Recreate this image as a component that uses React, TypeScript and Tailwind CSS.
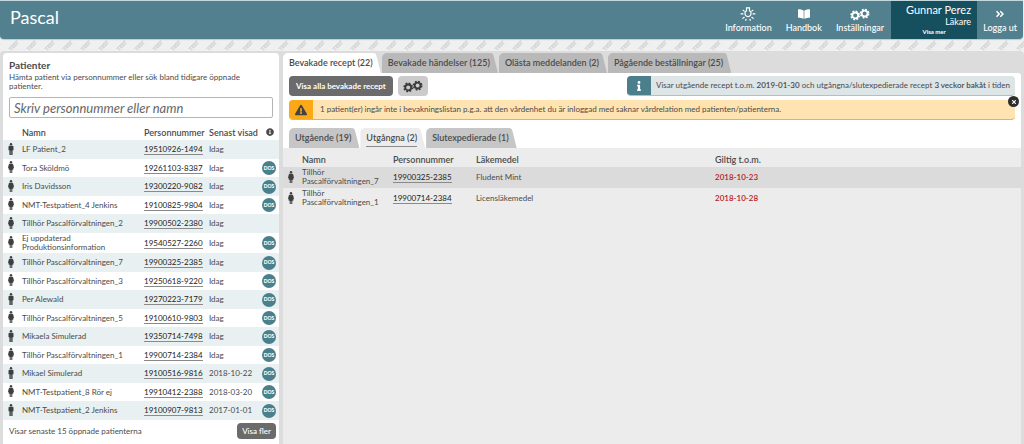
import type { ReactNode } from "react";
import { clsx } from "clsx";
import {
  FaAngleDoubleRight,
  FaBookOpen,
  FaExclamationTriangle,
  FaInfo,
  FaInfoCircle,
  FaTimes,
} from "react-icons/fa";

type Gender = "m" | "f";

type Patient = {
  name: string;
  pnr: string;
  seen: string;
  gender: Gender;
  dos?: boolean;
};

const patients: Patient[] = [
  { name: "LF Patient_2", pnr: "19510926-1494", seen: "Idag", gender: "m" },
  { name: "Tora Sköldmö", pnr: "19261103-8387", seen: "Idag", gender: "f", dos: true },
  { name: "Iris Davidsson", pnr: "19300220-9082", seen: "Idag", gender: "f", dos: true },
  { name: "NMT-Testpatient_4 Jenkins", pnr: "19100825-9804", seen: "Idag", gender: "f", dos: true },
  { name: "Tillhör Pascalförvaltningen_2", pnr: "19900502-2380", seen: "Idag", gender: "f" },
  { name: "Ej uppdaterad Produktionsinformation", pnr: "19540527-2260", seen: "Idag", gender: "f", dos: true },
  { name: "Tillhör Pascalförvaltningen_7", pnr: "19900325-2385", seen: "Idag", gender: "f", dos: true },
  { name: "Tillhör Pascalförvaltningen_3", pnr: "19250618-9220", seen: "Idag", gender: "f", dos: true },
  { name: "Per Alewald", pnr: "19270223-7179", seen: "Idag", gender: "m", dos: true },
  { name: "Tillhör Pascalförvaltningen_5", pnr: "19100610-9803", seen: "Idag", gender: "f", dos: true },
  { name: "Mikaela Simulerad", pnr: "19350714-7498", seen: "Idag", gender: "m", dos: true },
  { name: "Tillhör Pascalförvaltningen_1", pnr: "19900714-2384", seen: "Idag", gender: "f", dos: true },
  { name: "Mikael Simulerad", pnr: "19100516-9816", seen: "2018-10-22", gender: "m", dos: true },
  { name: "NMT-Testpatient_8 Rör ej", pnr: "19910412-2388", seen: "2018-03-20", gender: "f", dos: true },
  { name: "NMT-Testpatient_2 Jenkins", pnr: "19100907-9813", seen: "2017-01-01", gender: "m", dos: true },
];

const prescriptions = [
  { name: "Tillhör Pascalförvaltningen_7", pnr: "19900325-2385", drug: "Fludent Mint", valid: "2018-10-23" },
  { name: "Tillhör Pascalförvaltningen_1", pnr: "19900714-2384", drug: "Licensläkemedel", valid: "2018-10-28" },
];

const mainTabs = [
  "Bevakade recept (22)",
  "Bevakade händelser (125)",
  "Olästa meddelanden (2)",
  "Pågående beställningar (25)",
];

const subTabs = ["Utgående (19)", "Utgångna (2)", "Slutexpedierade (1)"];

const tabShape =
  "h-5 rounded-tl-[5px] text-[9px] font-semibold pl-1.5 pr-2 [clip-path:polygon(0_0,calc(100%-7px)_0,calc(100%-5px)_1px,calc(100%-4px)_4px,100%_100%,0_100%)]";

function LampIcon() {
  return (
    <svg
      viewBox="0 0 16 14"
      className="h-3.5 w-4"
      fill="none"
      stroke="currentColor"
      strokeWidth="1.2"
      strokeLinecap="round"
      aria-hidden="true"
    >
      <path d="M6.5 3.8a3.1 3.1 0 1 0 3 0V.8h-3z" />
      <path d="M1 6.8h2M13 6.8h2M2.8 11.4l1.4-1.1M13.2 11.4l-1.4-1.1M5.7 13.3l.4-1M10.3 13.3l-.4-1M3.2 3.3l1 .8M12.8 3.3l-1 .8" />
    </svg>
  );
}

function Cog({ cx, cy }: { cx: number; cy: number }) {
  return (
    <g fill="none" stroke="currentColor">
      <circle cx={cx} cy={cy} r="2.9" strokeWidth="1.8" />
      <circle cx={cx} cy={cy} r="4.1" strokeWidth="1.6" strokeDasharray="1.8 1.42" />
    </g>
  );
}

function Cogs() {
  return (
    <svg viewBox="0 0 20 13" className="h-[13px] w-5" aria-hidden="true">
      <Cog cx={5.2} cy={7.4} />
      <Cog cx={14.6} cy={5.6} />
    </svg>
  );
}

function Watermark() {
  return (
    <svg className="h-3 w-full" aria-hidden="true">
      <defs>
        <pattern id="watermark" x="4" width="18" height="12" patternUnits="userSpaceOnUse">
          <text
            x="7"
            y="12"
            transform="rotate(-45 7 12)"
            fontSize="5"
            fontWeight="900"
            fill="#d4d4d4"
            stroke="#d4d4d4"
            strokeWidth=".4"
          >
            TEST
          </text>
        </pattern>
      </defs>
      <rect width="100%" height="12" fill="url(#watermark)" />
    </svg>
  );
}

function HeaderLink({ icon, label }: { icon: ReactNode; label: string }) {
  return (
    <a href="#" className="flex flex-col items-center pt-[5px]">
      <span className="flex h-4 items-center">{icon}</span>
      <span className="text-[9px] leading-3 font-medium">{label}</span>
    </a>
  );
}

function PersonIcon({ gender }: { gender: Gender }) {
  return (
    <svg
      viewBox="0 0 12 24"
      className="h-3 w-1.5 fill-[#3f3f3f]"
      role="img"
      aria-label={gender === "m" ? "Man" : "Kvinna"}
    >
      <circle cx="6" cy="2.4" r="2.4" />
      {gender === "m" ? (
        <path d="M3 5.5h6a2 2 0 0 1 2 2v7H9.2V24H6.4v-8.5h-.8V24H2.8v-9.5H1v-7a2 2 0 0 1 2-2z" />
      ) : (
        <path d="M3.8 5.5h4.4c1.6 0 2.2 1.2 2.5 2.5l1.2 5.5c.2 1.4-1.2 1.8-1.7.7L9.8 12.5l.9 5H8.6V24H6.5v-6h-1v6H3.4v-6.5H1.3l.9-5-.4 1.7c-.5 1.1-1.9.7-1.7-.7L1.3 8c.3-1.3.9-2.5 2.5-2.5z" />
      )}
    </svg>
  );
}

function PnrLink({ pnr }: { pnr: string }) {
  return (
    <a href="#" className="inline-block border-b border-[#8a8a8a] leading-[10px] text-[#222]">
      {pnr}
    </a>
  );
}

function PatientPanel() {
  return (
    <section className="w-[276px] shrink-0 rounded-t-[4px] bg-white">
      <div className="px-1.5 pt-1.5">
        <h2 className="text-[10px] leading-3 font-bold">Patienter</h2>
        <p className="mt-0.5 leading-[9px]">
          Hämta patient via personnummer eller sök bland tidigare öppnade patienter.
        </p>
        <input
          type="text"
          aria-label="Skriv personnummer eller namn"
          placeholder="Skriv personnummer eller namn"
          className="mt-1.5 block h-[21px] w-full rounded-[2px] border border-[#b5b5b5] px-1 text-[13px] italic placeholder:text-[#666]"
        />
      </div>
      <table className="mt-1.5 w-full table-fixed leading-[9px]">
        <colgroup>
          <col className="w-[19px]" />
          <col />
          <col className="w-[65px]" />
          <col className="w-[53px]" />
          <col className="w-[17px]" />
        </colgroup>
        <thead>
          <tr className="h-4 text-left text-[9px] whitespace-nowrap">
            <th aria-label="Kön" />
            <th className="font-semibold">Namn</th>
            <th className="font-semibold">Personnummer</th>
            <th className="font-semibold">Senast visad</th>
            <th>
              <FaInfoCircle className="ml-1 size-2" aria-label="Information" />
            </th>
          </tr>
        </thead>
        <tbody>
          {patients.map((p) => (
            <tr key={p.pnr} className="odd:h-[19px] odd:bg-[#e8f0f1] even:h-[18px]">
              <td className="pb-0.5 pl-[5px]">
                <PersonIcon gender={p.gender} />
              </td>
              <td className="py-px pr-2">{p.name}</td>
              <td>
                <PnrLink pnr={p.pnr} />
              </td>
              <td>{p.seen}</td>
              <td>
                {p.dos && (
                  <span className="flex size-3.5 items-center justify-center rounded-full bg-[#4b7f8c] text-[5px] font-black text-white">
                    DOS
                  </span>
                )}
              </td>
            </tr>
          ))}
        </tbody>
      </table>
      <div className="flex items-center justify-between py-[3px] pr-[3px] pl-1.5">
        <span>Visar senaste 15 öppnade patienterna</span>
        <button className="h-4 rounded-[4px] bg-[#6b6b6b] px-[5px] font-medium text-white">Visa fler</button>
      </div>
    </section>
  );
}

function PrescriptionTable() {
  return (
    <table className="w-full table-fixed leading-[9px]">
      <colgroup>
        <col className="w-[19px]" />
        <col className="w-[91px]" />
        <col className="w-[83px]" />
        <col className="w-[239px]" />
        <col />
      </colgroup>
      <thead>
        <tr className="h-[19px] text-left text-[9px]">
          <th aria-label="Kön" />
          <th className="pt-1 font-semibold">Namn</th>
          <th className="pt-1 font-semibold">Personnummer</th>
          <th className="pt-1 font-semibold">Läkemedel</th>
          <th className="pt-1 font-semibold">Giltig t.o.m.</th>
        </tr>
      </thead>
      <tbody>
        {prescriptions.map((p) => (
          <tr key={p.pnr} className="h-[21px] odd:bg-[#dbdbdb]">
            <td className="pb-0.5 pl-[5px]">
              <PersonIcon gender="f" />
            </td>
            <td className="pr-2 pb-0.5">{p.name}</td>
            <td>
              <PnrLink pnr={p.pnr} />
            </td>
            <td>{p.drug}</td>
            <td className="font-semibold text-[#b8201f]">{p.valid}</td>
          </tr>
        ))}
      </tbody>
    </table>
  );
}

function WatchPanel() {
  return (
    <section className="flex min-w-0 grow flex-col">
      <div className="flex gap-px">
        {mainTabs.map((label, i) => (
          <button key={label} className={clsx(tabShape, i === 0 ? "bg-white" : "bg-[#b9b9b9]")}>
            {label}
          </button>
        ))}
      </div>
      <div className="rounded-tr-[3px] bg-white px-1.5 pt-[3px]">
        <div className="flex items-start gap-[5px]">
          <button className="h-5 rounded-[4px] bg-[#6b6b6b] px-[7px] font-bold text-white">
            Visa alla bevakade recept
          </button>
          <button
            aria-label="Inställningar"
            className="flex h-5 w-[30px] items-center justify-center rounded-[4px] bg-[#cbcbcb] text-[#3a3a3a]"
          >
            <Cogs />
          </button>
          <div className="ml-auto flex h-5 overflow-hidden rounded-[4px] border-b border-[#b4bfc2] bg-[#dde5e7]">
            <span className="flex w-6 items-center justify-center bg-[#4b7f8c] text-white">
              <FaInfo className="size-2.5" aria-hidden="true" />
            </span>
            <p className="px-[5px] leading-[18px]">
              Visar utgående recept t.o.m. <b className="font-semibold">2019-01-30</b> och
              utgångna/slutexpedierade recept <b className="font-semibold">3 veckor bakåt</b> i tiden
            </p>
          </div>
        </div>
        <div className="relative mt-1">
          <div className="flex h-5 overflow-hidden rounded-[4px] border-b border-[#c9b68c] bg-[#ffe3b0]">
            <span className="flex w-6 items-center justify-center bg-[#fba919] text-[#444]">
              <FaExclamationTriangle className="size-3" aria-hidden="true" />
            </span>
            <p className="px-[7px] leading-[18px]">
              1 patient(er) ingår inte i bevakningslistan p.g.a. att den vårdenhet du är inloggad med saknar
              vårdrelation med patienten/patienterna.
            </p>
          </div>
          <button
            aria-label="Stäng"
            className="absolute -top-1 -right-1 flex size-[11px] items-center justify-center rounded-full bg-[#2e2e2e] text-white"
          >
            <FaTimes className="size-1.5" />
          </button>
        </div>
        <div className="mt-2 flex gap-px">
          {subTabs.map((label, i) => (
            <button key={label} className={clsx(tabShape, i === 1 ? "bg-[#ececec]" : "bg-[#c6c6c6]")}>
              <span className={clsx("block leading-4", i === 1 && "border-b border-[#8a8a8a]")}>
                {label}
              </span>
            </button>
          ))}
        </div>
      </div>
      <div className="grow bg-[#ececec]">
        <PrescriptionTable />
      </div>
    </section>
  );
}

export default function App() {
  return (
    <div className="flex min-h-screen flex-col bg-[#f0f0f0] font-['Lato',sans-serif] text-[8px] text-[#4b4b4b]">
      <header className="mr-px flex h-[39px] justify-between rounded-b-[4px] border-t border-[#c3d8de] bg-[#52808e] pl-2.5 text-white shadow-[0_1px_1px_#b5ced5]">
        <h1 className="pt-0.5 text-lg">Pascal</h1>
        <nav className="flex">
          <div className="flex gap-3.5 pr-[7px]">
            <HeaderLink icon={<LampIcon />} label="Information" />
            <HeaderLink icon={<FaBookOpen className="size-3" />} label="Handbok" />
            <HeaderLink icon={<Cogs />} label="Inställningar" />
          </div>
          <a href="#" className="flex w-[86px] flex-col bg-[#164f5d] px-1.5 pt-0.5 text-right">
            <span className="text-[11px] leading-[13px]">Gunnar Perez</span>
            <span className="text-[9px] leading-[11px]">Läkare</span>
            <span className="text-center text-[6px] leading-[10px] font-bold">Visa mer</span>
          </a>
          <div className="px-1.5">
            <HeaderLink icon={<FaAngleDoubleRight className="size-2.5" />} label="Logga ut" />
          </div>
        </nav>
      </header>
      <Watermark />
      <main className="flex grow gap-1 rounded-t-[4px] bg-[#dcdcdc] px-[3px] pt-0.5">
        <PatientPanel />
        <WatchPanel />
      </main>
    </div>
  );
}
